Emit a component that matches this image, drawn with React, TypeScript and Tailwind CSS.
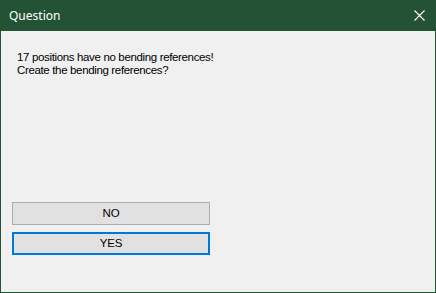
import React from 'react';

export default function App() {
    return (
        <div className="w-[436px] h-[293px] flex flex-col bg-[#245234] border-x border-b border-[#245234]" style={{ fontFamily: '"Liberation Sans", Arial, sans-serif' }}>
            {/* title bar */}
            <div className="h-[31px] shrink-0 flex items-center justify-between pl-[8px] pr-[10px]">
                <span className="text-white text-[12px] font-['Noto_Sans',sans-serif] leading-none pt-[1px]">Question</span>
                <svg width="11" height="11" viewBox="0 0 11 11">
                    <path d="M0.5 0.5 L10.5 10.5 M10.5 0.5 L0.5 10.5" stroke="#ffffff" strokeWidth="1.1" />
                </svg>
            </div>
            <div className="flex-1 bg-[#f0f0f0] flex flex-col px-[11px]">
                <div className="pl-[5px] pt-[20px] text-[11.5px] leading-[13px] tracking-[-0.35px] text-black">
                    <p>17 positions have no bending references!</p>
                    <p>Create the bending references?</p>
                </div>
                <div className="mt-[125px] flex flex-col gap-[7px]">
                    <button className="w-[198px] h-[23px] bg-[#e1e1e1] border border-[#adadad] text-[11.5px] tracking-[-0.2px] text-black">NO</button>
                    <button className="w-[198px] h-[23px] bg-[#e1e1e1] border-2 border-[#0078d7] text-[11.5px] tracking-[-0.2px] text-black">YES</button>
                </div>
            </div>
        </div>
    );
}
